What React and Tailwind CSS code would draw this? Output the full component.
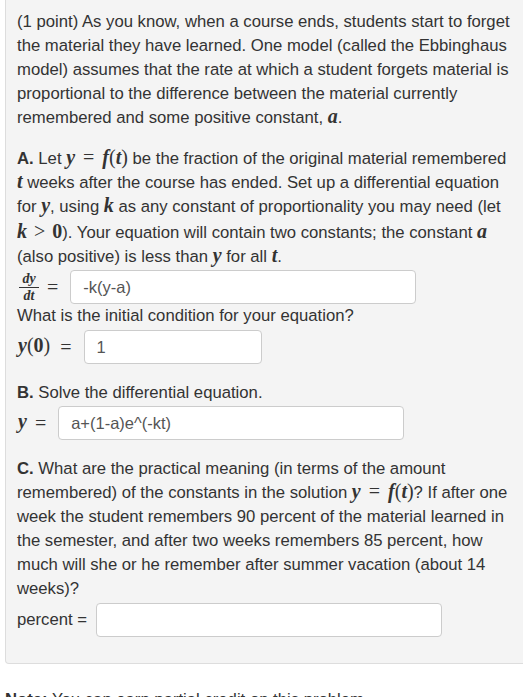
import React from 'react';

const M = ({ children }) => (
  <span className="font-['Liberation_Serif',serif] italic font-bold text-[20px] leading-none">{children}</span>
);
const Up = ({ children }) => (
  <span className="font-['Liberation_Serif',serif] font-normal text-[20px] leading-none not-italic">{children}</span>
);
const Eq = () => (
  <span className="font-['Liberation_Serif',serif] text-[20px] leading-none mx-[8px]">=</span>
);

function Field({ value, className = '' }) {
  return (
    <div
      className={`h-[34px] bg-white border border-[#cccccc] rounded-[4px] flex items-center px-[12px] text-[16.5px] text-[#555555] ${className}`}
    >
      {value}
    </div>
  );
}

export default function App() {
  return (
    <div className="w-[523px] h-[697px] overflow-hidden bg-white font-['Liberation_Sans',Arial,sans-serif] text-[16.7px] leading-[24px] text-[#333333]">
      <div className="ml-[5px] w-[540px] bg-[#f4f4f4] border border-t-0 border-[#dddddd] rounded-bl-[4px] pl-[11px] pt-[10px] pb-[26px]">
        <p className="w-[520px]">
          (1 point) As you know, when a course ends, students start to forget<br />
          the material they have learned. One model (called the Ebbinghaus<br />
          model) assumes that the rate at which a student forgets material is<br />
          proportional to the difference between the material currently<br />
          remembered and some positive constant, <M>a</M>.
        </p>

        <p className="w-[520px] mt-[17px]">
          <b>A.</b> Let <M>y</M>
          <Eq />
          <M>f</M>
          <Up>(</Up>
          <M>t</M>
          <Up>)</Up> be the fraction of the original material remembered<br />
          <M>t</M> weeks after the course has ended. Set up a differential equation<br />
          for <M>y</M>, using <M>k</M> as any constant of proportionality you may need (let<br />
          <M>k</M>
          <span className="font-['Liberation_Serif',serif] text-[20px] mx-[7px]">&gt;</span>
          <Up>
            <b>0</b>
          </Up>
          ). Your equation will contain two constants; the constant <M>a</M>
          <br />
          (also positive) is less than <M>y</M> for all <M>t</M>.
        </p>

        <div className="flex items-center mt-[1px]">
          <div className="w-[20px] ml-[2px] flex flex-col items-center font-['Liberation_Serif',serif] italic font-bold text-[14px] leading-[14px]">
            <span>dy</span>
            <span className="w-full border-t border-[#333333] my-[1px]"></span>
            <span>dt</span>
          </div>
          <span className="font-['Liberation_Serif',serif] text-[20px] ml-[8px]">=</span>
          <Field value="-k(y-a)" className="ml-[12px] w-[346px]" />
        </div>

        <p>What is the initial condition for your equation?</p>

        <div className="flex items-center mt-[2px]">
          <span className="ml-[1px]">
            <M>y</M>
            <Up>
              (<b>0</b>)
            </Up>
          </span>
          <span className="font-['Liberation_Serif',serif] text-[20px] ml-[10px]">=</span>
          <Field value="1" className="ml-[12px] w-[178px]" />
        </div>

        <p className="mt-[17px]">
          <b>B.</b> Solve the differential equation.
        </p>

        <div className="flex items-center mt-[1px]">
          <span className="ml-[1px]">
            <M>y</M>
          </span>
          <span className="font-['Liberation_Serif',serif] text-[20px] ml-[8px]">=</span>
          <Field value="a+(1-a)e^(-kt)" className="ml-[12px] w-[346px]" />
        </div>

        <p className="w-[520px] mt-[17px]">
          <b>C.</b> What are the practical meaning (in terms of the amount<br />
          remembered) of the constants in the solution <M>y</M>
          <Eq />
          <M>f</M>
          <Up>(</Up>
          <M>t</M>
          <Up>)</Up>? If after one<br />
          week the student remembers 90 percent of the material learned in<br />
          the semester, and after two weeks remembers 85 percent, how<br />
          much will she or he remember after summer vacation (about 14<br />
          weeks)?
        </p>

        <div className="flex items-center mt-[2px]">
          <span>percent =</span>
          <Field value="" className="ml-[9px] w-[346px]" />
        </div>
      </div>

      <p className="ml-[5px] mt-[24px]">
        <b>Note:</b> You can earn partial credit on this problem.
      </p>
    </div>
  );
}
